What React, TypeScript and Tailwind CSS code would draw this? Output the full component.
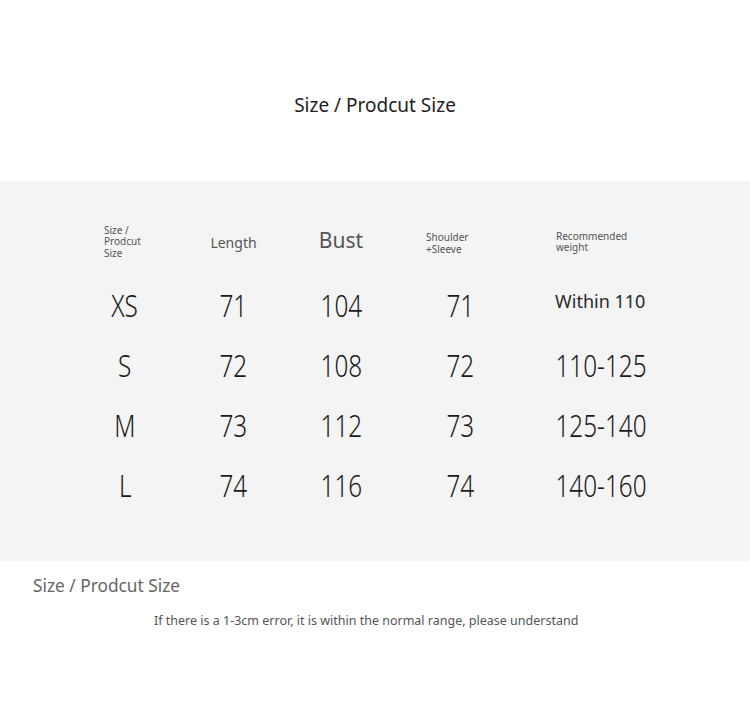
import React from "react";

const rows = [
  ["XS", "71", "104", "71", "Within 110"],
  ["S", "72", "108", "72", "110-125"],
  ["M", "73", "112", "73", "125-140"],
  ["L", "74", "116", "74", "140-160"],
];

function Big({ t }: { t: string }) {
  return (
    <div className="flex justify-center">
      <span className="inline-block scale-x-[0.76] text-[32px] font-light leading-[40px] text-[#1a1a1a]">{t}</span>
    </div>
  );
}

export default function App() {
  return (
    <div className="w-[750px] h-[721px] bg-white font-['Noto_Sans',sans-serif] overflow-hidden">
      <div className="h-[181px] pt-[92px] text-center text-[19px] leading-[26px] text-[#222]">
        Size / Prodcut Size
      </div>
      <div className="h-[380px] bg-[#f4f4f4] pt-[31px] pl-[70px]">
        <div className="grid grid-cols-[110px_107px_108px_130px_152px] h-[60px] items-center text-[#555]">
          <div className="pl-[34px] text-[10px] leading-[11.5px]">Size /<br />Prodcut<br />Size</div>
          <div className="text-center text-[14px]">Length</div>
          <div className="text-center text-[21px] -mt-[3px]">Bust</div>
          <div className="pl-[31px] text-[10px] leading-[12px] mt-[1px]">Shoulder<br />+Sleeve</div>
          <div className="pl-[31px] text-[10px] leading-[11px] -mt-[1px]">Recommended<br />weight</div>
        </div>
        <div className="mt-[3px]">
          {rows.map((r) => (
            <div key={r[0]} className="grid grid-cols-[110px_107px_108px_130px_152px] h-[60px] items-center">
              <Big t={r[0]} />
              <Big t={r[1]} />
              <Big t={r[2]} />
              <Big t={r[3]} />
              {r[0] === "XS" ? (
                <div className="pl-[30px] text-[18px] -mt-[7px] text-[#2a2a2a]">{r[4]}</div>
              ) : (
                <Big t={r[4]} />
              )}
            </div>
          ))}
        </div>
      </div>
      <div className="pl-[33px] pt-[13px] text-[17.3px] leading-[24px] text-[#666]">Size / Prodcut Size</div>
      <div className="pl-[154px] pt-[14px] text-[12.5px] leading-[18px] text-[#555]">
        If there is a 1-3cm error, it is within the normal range, please understand
      </div>
    </div>
  );
}
